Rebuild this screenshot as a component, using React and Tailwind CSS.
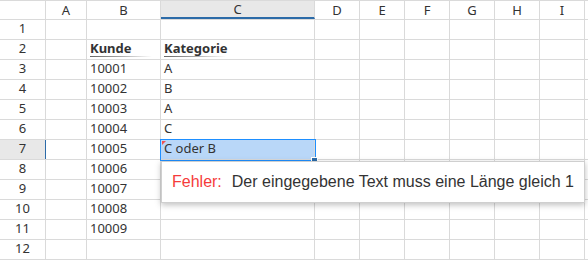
import React from "react";

const cols = [
  { key: "A", w: "w-[41px]" },
  { key: "B", w: "w-[74px]" },
  { key: "C", w: "w-[154px]" },
  { key: "D", w: "w-[45px]" },
  { key: "E", w: "w-[45px]" },
  { key: "F", w: "w-[45px]" },
  { key: "G", w: "w-[45px]" },
  { key: "H", w: "w-[45px]" },
  { key: "I", w: "w-[45px]" },
];

const data = {
  2: { B: "Kunde", C: "Kategorie" },
  3: { B: "10001", C: "A" },
  4: { B: "10002", C: "B" },
  5: { B: "10003", C: "A" },
  6: { B: "10004", C: "C" },
  7: { B: "10005", C: "C oder B" },
  8: { B: "10006" },
  9: { B: "10007" },
  10: { B: "10008" },
  11: { B: "10009" },
};

const HeaderLabel = ({ text }) => (
  <div className="relative">
    <span className="font-bold">{text}</span>
    <div className="absolute left-0 top-[17px] h-px w-[62px] bg-gradient-to-r from-[#666] via-[#aaa] to-transparent" />
  </div>
);

const Cell = ({ row, col, w }) => {
  const value = data[row]?.[col];
  const active = row === 7 && col === "C";
  return (
    <div
      className={`${w} shrink-0 h-full border-r border-[#dadada] px-[3px] flex items-end pb-[1px] overflow-hidden whitespace-nowrap ${
        active ? "bg-[#b9d7f8]" : ""
      }`}
    >
      {row === 2 && value ? <HeaderLabel text={value} /> : value}
    </div>
  );
};

export default function App() {
  const rows = Array.from({ length: 12 }, (_, i) => i + 1);
  return (
    <div
      className="relative w-[588px] h-[260px] overflow-hidden bg-white text-[13px] text-[#333]"
      style={{ fontFamily: '"Noto Sans", "DejaVu Sans", sans-serif' }}
    >
      {/* column headers */}
      <div className="flex h-[20px] border-t border-b border-[#dadada]">
        <div className="w-[46px] shrink-0 border-r border-[#dadada]" />
        {cols.map((c) => (
          <div
            key={c.key}
            className={`${c.w} shrink-0 border-r border-[#dadada] flex items-center justify-center leading-none ${
              c.key === "C" ? "bg-[#e8e8e8] border-b-2 border-b-[#2c6ba8]" : ""
            }`}
          >
            {c.key}
          </div>
        ))}
        <div className="flex-1" />
      </div>

      {/* rows */}
      {rows.map((r) => (
        <div key={r} className="flex h-[20px] border-b border-[#dadada]">
          <div
            className={`w-[46px] shrink-0 border-r flex items-end justify-center pb-[1px] ${
              r === 7 ? "bg-[#e8e8e8] border-[#2c6ba8]" : "border-[#dadada]"
            }`}
          >
            {r}
          </div>
          {cols.map((c) => (
            <Cell key={c.key} row={r} col={c.key} w={c.w} />
          ))}
          <div className="flex-1" />
        </div>
      ))}

      {/* selection overlay on C7 */}
      <div className="absolute left-[160px] top-[139px] w-[156px] h-[22px] border border-[#1e8fff] pointer-events-none" />
      <div className="absolute left-[162px] top-[141px] w-0 h-0 border-t-[4px] border-t-[#f05050] border-r-[4px] border-r-transparent" />
      <div className="absolute left-[311px] top-[157px] w-[7px] h-[5px] bg-[#2c6ba8] border border-white" />

      {/* validation tooltip */}
      <div
        className="absolute left-[161px] top-[161px] w-[424px] h-[42px] bg-white border border-[#cfcfcf] shadow-[0_2px_6px_rgba(0,0,0,0.25)] flex items-center pl-[10px] text-[16px] whitespace-nowrap"
        style={{ fontFamily: '"Liberation Sans", Arial, sans-serif' }}
      >
        <span className="text-[#f53b3b]">Fehler:</span>
        <span className="ml-[10px] text-[#333]">Der eingegebene Text muss eine Länge gleich 1</span>
      </div>
    </div>
  );
}
